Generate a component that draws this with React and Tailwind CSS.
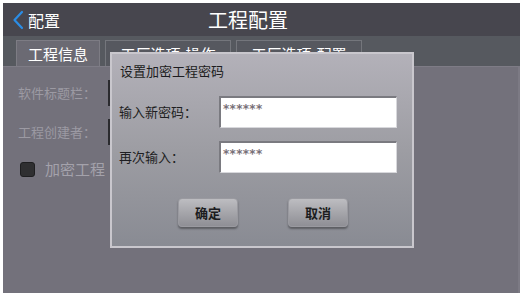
import React from "react";

const font = { fontFamily: '"Noto Sans CJK SC", "Noto Sans", sans-serif' };

function Tab({ label, active, w }) {
  return (
    <div
      className={`h-[26px] ${w} flex items-center justify-center border border-b-0 text-[15px] leading-none text-white ${
        active ? "bg-[#6b6a73] border-[#7d7c84]" : "bg-[#56585f] border-[#74767c]"
      }`}
    >
      {label}
    </div>
  );
}

function PwdRow({ label }) {
  return (
    <div className="flex items-center h-[32px]">
      <div className="w-[101px] text-[13px] text-[#1e1e22] pl-[1px]">{label}</div>
      <div className="w-[178px] h-[32px] bg-white border-t-2 border-l-2 border-[#7a7a80] border-r border-b border-r-[#d8d8dc] border-b-[#d8d8dc] px-[2px] pt-[5px] text-[12px] font-bold leading-none text-[#787078] tracking-[0.3px]" style={{ fontFamily: '"DejaVu Sans", sans-serif' }}>
        ******
      </div>
    </div>
  );
}

function Btn({ label }) {
  return (
    <div className="w-[60px] h-[29px] rounded-[4px] bg-gradient-to-b from-[#bdbdc1] to-[#8f8f95] border border-[#9a9aa0] shadow-[0_2px_2px_rgba(0,0,0,0.35)] flex items-center justify-center text-[13px] font-bold text-[#1c1c20]">
      {label}
    </div>
  );
}

export default function App() {
  return (
    <div className="w-[524px] h-[297px] bg-white pt-[3px] pl-[3px] pr-[4px] pb-[4px]" style={font}>
      <div className="relative w-full h-full flex flex-col overflow-hidden">
        {/* header */}
        <div className="h-[33px] bg-[#47464e] flex items-center relative shrink-0">
          <div className="flex items-center pl-[9px]">
            <svg width="12" height="20" viewBox="0 0 12 20" className="mr-[4px]">
              <path d="M10 2 L2.5 10 L10 18" fill="none" stroke="#2b8de6" strokeWidth="2.2" strokeLinecap="round" strokeLinejoin="round" />
            </svg>
            <span className="text-[16px] text-white leading-none">配置</span>
          </div>
          <div className="absolute left-[205px] top-[4px] text-[20px] leading-[26px] text-white">工程配置</div>
        </div>
        {/* tab bar */}
        <div className="h-[30px] bg-[#56595f] flex items-end gap-[5px] pl-[13px] shrink-0">
          <Tab label="工程信息" active w="w-[84px]" />
          <Tab label="工厂选项-操作" w="w-[126px]" />
          <Tab label="工厂选项-配置" w="w-[126px]" />
        </div>
        {/* content */}
        <div className="flex-1 bg-[#73717b] border-t border-[#7e7c86] border-r-2 border-r-[#7c7a84] flex flex-col pl-[15px] pt-[12px]">
          <div className="flex items-center h-[28px]">
            <span className="w-[90px] text-[13px] text-[#9c9aa3]">软件标题栏：</span>
            <div className="w-[200px] h-[26px] bg-[#f4f4f4] border-l-2 border-[#2a2a2e]" />
          </div>
          <div className="flex items-center h-[28px] mt-[11px]">
            <span className="w-[90px] text-[13px] text-[#9c9aa3]">工程创建者：</span>
            <div className="w-[200px] h-[26px] bg-[#f4f4f4] border-l-2 border-[#2a2a2e]" />
          </div>
          <div className="flex items-center mt-[12px] pl-[2px]">
            <div className="w-[15px] h-[15px] rounded-[3px] bg-[#2f2f31] border border-[#1e1e20]" />
            <span className="ml-[10px] text-[15px] text-[#a4a2ab]">加密工程</span>
          </div>
        </div>

        {/* dialog */}
        <div className="absolute left-[107px] top-[49px] w-[304px] h-[196px] border-2 border-[#c9c7cd] bg-gradient-to-b from-[#b3b1b9] via-[#9d9da3] to-[#898b93] flex flex-col px-[6px]">
          <div className="text-[13px] text-[#1c1c20] mt-[10px] ml-[2px] leading-none">设置加密工程密码</div>
          <div className="mt-[19px] flex flex-col gap-[13px]">
            <PwdRow label="输入新密码：" />
            <PwdRow label="再次输入：" />
          </div>
          <div className="mt-[25px] flex justify-center gap-[50px] pl-[2px]">
            <Btn label="确定" />
            <Btn label="取消" />
          </div>
        </div>
      </div>
    </div>
  );
}
